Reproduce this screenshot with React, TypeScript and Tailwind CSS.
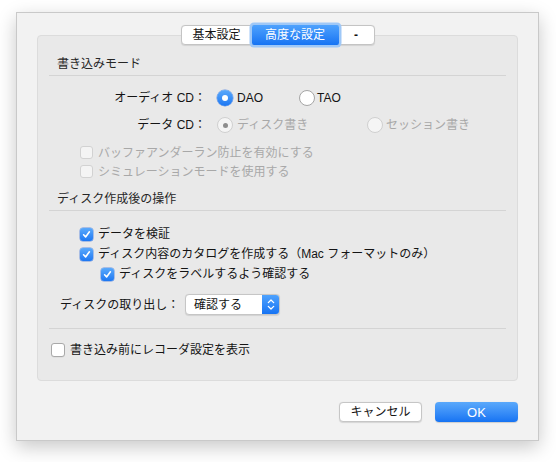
import React from "react";

function CheckMark() {
  return (
    <svg width="9" height="9" viewBox="0 0 9 9" fill="none">
      <path d="M1.6 4.8 L3.6 6.9 L7.4 1.8" stroke="white" strokeWidth="1.6" strokeLinecap="round" strokeLinejoin="round" />
    </svg>
  );
}

function Checkbox({ checked, disabled }: { checked?: boolean; disabled?: boolean }) {
  if (checked) {
    return (
      <span className="flex w-[13px] h-[13px] shrink-0 items-center justify-center rounded-[3px] bg-linear-to-b from-[#5aa9fb] to-[#1c77f2] shadow-[0_0_0_0.5px_rgba(20,90,220,0.6)]">
        <CheckMark />
      </span>
    );
  }
  if (disabled) {
    return <span className="block w-[13px] h-[13px] shrink-0 rounded-[3px] border border-[#d2d2d2] bg-[#f4f4f4]" />;
  }
  return <span className="block w-[14px] h-[14px] shrink-0 rounded-[3px] border border-[#a9a9a9] bg-white shadow-[0_0.5px_0.5px_rgba(0,0,0,0.08)]" />;
}

function Radio({ on, disabled }: { on?: boolean; disabled?: boolean }) {
  if (on && !disabled) {
    return (
      <span className="flex w-[16px] h-[16px] shrink-0 items-center justify-center rounded-full bg-linear-to-b from-[#5aa9fb] to-[#1c77f2] shadow-[0_0_0_0.5px_rgba(20,90,220,0.6)]">
        <span className="block w-[6px] h-[6px] rounded-full bg-white" />
      </span>
    );
  }
  if (on && disabled) {
    return (
      <span className="flex w-[16px] h-[16px] shrink-0 items-center justify-center rounded-full border border-[#d0d0d0] bg-[#f5f5f5]">
        <span className="block w-[5px] h-[5px] rounded-full bg-[#8e8e8e]" />
      </span>
    );
  }
  if (disabled) {
    return <span className="block w-[16px] h-[16px] shrink-0 rounded-full border border-[#d0d0d0] bg-[#f5f5f5]" />;
  }
  return <span className="block w-[16px] h-[16px] shrink-0 rounded-full border border-[#a5a5a5] bg-white" />;
}

export default function App() {
  return (
    <div className="w-[556px] h-[462px] bg-white pt-[12px] pl-[16px] font-['Liberation_Sans','Noto_Sans_CJK_JP',sans-serif] text-[12px] text-[#141414] leading-none">
      <div className="w-[523px] h-[429px] border border-[#c9c9c9] bg-[#f2f2f2] shadow-[0_6px_18px_rgba(0,0,0,0.22)] px-[20px] pt-[12px] flex flex-col">
        {/* Segmented control */}
        <div className="relative z-10 flex justify-center">
          <div className="flex h-[20px] rounded-[4px] border border-[#c4c4c4] bg-white shadow-[0_0.5px_1px_rgba(0,0,0,0.1)]">
            <div className="w-[70px] flex items-center justify-center">基本設定</div>
            <div className="w-[87px] -my-[1px] flex items-center justify-center text-white bg-linear-to-b from-[#4ea2fd] to-[#1573f3] rounded-[2px] shadow-[0_0_0_2.5px_#9fc8f7]">
              高度な設定
            </div>
            <div className="w-[35px] flex items-center justify-center font-bold">-</div>
          </div>
        </div>

        {/* Panel */}
        <div className="-mt-[10px] h-[346px] rounded-[4px] border border-[#dcdcdc] bg-[#e9e9e9] px-[11px] pt-[20px] flex flex-col">
          <div className="h-[16px] pl-[8px] flex items-center text-[#262626]">書き込みモード</div>
          <div className="mt-[3px] h-px bg-[#d4d4d4]" />

          <div className="mt-[12px] h-[20px] flex items-center">
            <div className="w-[157px] text-right">オーディオ CD：</div>
            <div className="ml-[11px] w-[82px] flex items-center gap-[4px]">
              <Radio on />
              <span>DAO</span>
            </div>
            <div className="flex items-center gap-[2px]">
              <Radio />
              <span>TAO</span>
            </div>
          </div>

          <div className="mt-[7px] h-[20px] flex items-center">
            <div className="w-[157px] text-right">データ CD：</div>
            <div className="ml-[11px] w-[150px] flex items-center gap-[4px] text-[#a8a8a8]">
              <Radio on disabled />
              <span>ディスク書き</span>
            </div>
            <div className="flex items-center gap-[3px] text-[#a8a8a8]">
              <Radio disabled />
              <span>セッション書き</span>
            </div>
          </div>

          <div className="mt-[8px] h-[19px] pl-[31px] flex items-center gap-[5px] text-[#a8a8a8]">
            <Checkbox disabled />
            <span>バッファアンダーラン防止を有効にする</span>
          </div>
          <div className="h-[19px] pl-[31px] flex items-center gap-[5px] text-[#a8a8a8]">
            <Checkbox disabled />
            <span>シミュレーションモードを使用する</span>
          </div>

          <div className="mt-[10px] h-[16px] pl-[8px] flex items-center text-[#262626]">ディスク作成後の操作</div>
          <div className="mt-[3px] h-px bg-[#d4d4d4]" />

          <div className="mt-[13px] h-[20px] pl-[31px] flex items-center gap-[5px]">
            <Checkbox checked />
            <span>データを検証</span>
          </div>
          <div className="h-[20px] pl-[31px] flex items-center gap-[5px]">
            <Checkbox checked />
            <span>ディスク内容のカタログを作成する（Mac フォーマットのみ）</span>
          </div>
          <div className="h-[20px] pl-[52px] flex items-center gap-[5px]">
            <Checkbox checked />
            <span>ディスクをラベルするよう確認する</span>
          </div>

          <div className="mt-[10px] h-[21px] pl-[11px] flex items-center">
            <div className="w-[125px]">ディスクの取り出し：</div>
            <div className="w-[95px] h-[21px] flex rounded-[4px] border border-[#c6c6c6] bg-white shadow-[0_0.5px_1px_rgba(0,0,0,0.1)] overflow-hidden">
              <div className="flex-1 flex items-center pl-[8px]">確認する</div>
              <div className="w-[17px] flex items-center justify-center bg-linear-to-b from-[#4ea2fd] to-[#1573f3]">
                <svg width="8" height="13" viewBox="0 0 8 13" fill="none">
                  <path d="M1.3 4.6 L4 2 L6.7 4.6" stroke="white" strokeWidth="1.3" strokeLinecap="round" strokeLinejoin="round" />
                  <path d="M1.3 8.4 L4 11 L6.7 8.4" stroke="white" strokeWidth="1.3" strokeLinecap="round" strokeLinejoin="round" />
                </svg>
              </div>
            </div>
          </div>

          <div className="mt-[13px] h-px bg-[#d4d4d4]" />

          <div className="mt-[11px] h-[20px] pl-[2px] flex items-center gap-[5px]">
            <Checkbox />
            <span>書き込み前にレコーダ設定を表示</span>
          </div>
        </div>

        {/* Buttons */}
        <div className="mt-[21px] flex justify-end gap-[13px]">
          <div className="w-[83px] h-[20px] flex items-center justify-center rounded-[4px] border border-[#c6c6c6] bg-white shadow-[0_0.5px_1px_rgba(0,0,0,0.12)]">
            キャンセル
          </div>
          <div className="w-[83px] h-[20px] flex items-center justify-center rounded-[4px] bg-linear-to-b from-[#5aa9fb] to-[#1573f3] text-white text-[13px] shadow-[0_0.5px_1px_rgba(0,0,0,0.15)]">
            OK
          </div>
        </div>
      </div>
    </div>
  );
}
